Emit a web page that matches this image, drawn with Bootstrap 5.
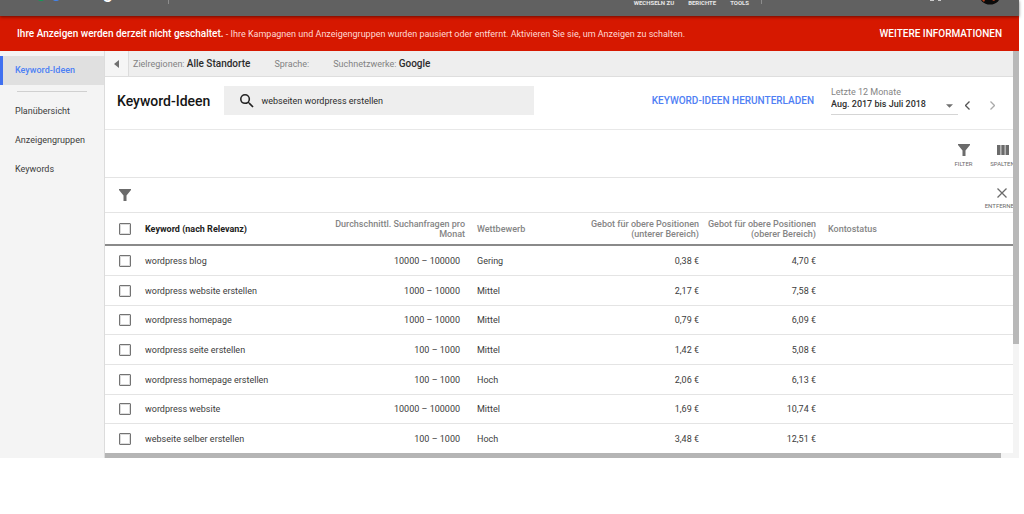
<!DOCTYPE html>
<html lang="de">
<head>
<meta charset="utf-8">
<meta name="viewport" content="width=device-width, initial-scale=1">
<title>Keyword-Ideen</title>
<link href="https://cdn.jsdelivr.net/npm/bootstrap@5.3.0/dist/css/bootstrap.min.css" rel="stylesheet">
<style>
  body { font-family: Roboto, "Liberation Sans", sans-serif; font-size: 9px; line-height: 12px; color: #3c3c3c; background: #fff; overflow: hidden; }
  a { text-decoration: none; color: inherit; }
  button { background: none; border: 0; padding: 0; color: inherit; font: inherit; }
  svg { display: block; fill: currentColor; flex: none; }
  .app-shell { margin-right: 5px; }

  /* top bar, scrolled mostly out of view */
  .topbar { height: 16px; background: #616161; color: #e6e6e6; position: relative; z-index: 1; box-shadow: 0 1px 3px rgba(0,0,0,.5); }
  .topbar-inner { height: 16px; overflow: hidden; }
  .topbar-inner > * { flex: none; }
  .brand-name { font-size: 18px; line-height: 24px; font-weight: 500; color: #fff; margin-bottom: 12px; margin-left: 8px; width: 98px; }
  .brand-dots { margin-left: 36px; }
  .toplinks { font-size: 6px; line-height: 8px; font-weight: 700; gap: 14px; padding-bottom: 9px; }
  .tick { width: 1px; height: 4px; background: #8d8d8d; margin-bottom: 12px; }

  .alertbar { background: #d61800; color: #ffd9d4; height: 35px; padding: 0 17px; }
  .alertbar strong { font-size: 10px; font-weight: 500; color: #fff; }
  .alertbar a { font-size: 10px; font-weight: 500; color: #fff; }

  .side { width: 105px; background: #f4f4f4; border-right: 1px solid #dcdcdc; padding-top: 5px; }
  .side a { display: block; height: 29px; line-height: 29px; padding-left: 15px; }
  .side a.current { background: #e0e0e0; border-left: 3px solid #4070f0; padding-left: 12px; color: #4d80f5; font-weight: 500; }
  .side hr { margin: 6px 17px 5px; border-color: #d0d0d0; opacity: 1; }

  .context { height: 26px; background: #eee; border-bottom: 1px solid #dedede; color: #828282; }
  .context b { color: #2b2b2b; font-size: 10px; font-weight: 500; }
  .context button { width: 24px; height: 25px; background: #f5f5f5; border-right: 1px solid #dcdcdc; color: #707070; }

  .title-row { height: 53px; border-bottom: 1px solid #e8e8e8; padding: 0 18px 5px 12px; }
  .title-row h1 { font-size: 14px; line-height: 20px; font-weight: 500; color: #151515; margin: 0 14px 0 0; }
  .searchbox { width: 310px; height: 29px; background: #eee; padding-left: 16px; gap: 7px; color: #222; }
  .searchbox input { border: 0; background: none; font-size: 9px; padding: 0; color: #2b2b2b; outline: 0; }
  .download { color: #4f80f4; font-size: 10px; font-weight: 500; }
  .period { width: 127px; margin-left: 17px; }
  .period label { display: block; font-size: 9px; line-height: 12px; color: #858585; }
  .period select { appearance: none; border: 0; border-bottom: 1px solid #d5d5d5; border-radius: 0; width: 100%; height: 17px; padding: 0 0 3px; font-size: 9px; line-height: 13px; font-weight: 500; color: #303030;
    background: #fff url("data:image/svg+xml,%3Csvg xmlns='http://www.w3.org/2000/svg' viewBox='0 0 8 4'%3E%3Cpath fill='%23707070' d='M0 0h8L4 4z'/%3E%3C/svg%3E") no-repeat right 5px top 6px / 7px 4px; }
  .pager { gap: 20px; margin-left: 7px; padding-top: 9px; }

  .tools { height: 48px; border-bottom: 1px solid #e4e4e4; overflow: hidden; color: #6b6b6b; padding-top: 4px; }
  .tools.filters { height: 35px; padding: 0 0 0 14px; }
  .tool { width: 39px; font-size: 6px; line-height: 8px; white-space: nowrap; flex: none; display: flex; flex-direction: column; align-items: center; }
  .tool-group { margin-right: -9px; }
  .filters .tool { margin-right: -8px; padding-top: 7px; }

  .kw-table { width: 100%; table-layout: fixed; border-collapse: separate; border-spacing: 0; }
  .kw-table td, .kw-table th { padding: 0 6px; vertical-align: middle; white-space: nowrap; }
  .kw-table th { height: 33px; font-weight: 500; line-height: 10px; color: #858585; border-bottom: 2px solid #8a8a8a; }
  .kw-table th.sorted { color: #222; font-weight: 700; }
  .kw-table td { height: 30px; border-bottom: 1px solid #e4e4e4; }
  .kw-table tbody tr:nth-child(3n) td { height: 29px; }
  .kw-table tbody tr:last-child td { height: 29px; border-bottom: 0; }
  .kw-table .num { text-align: right; padding-left: 0; }
  .kw-table td.volume { padding-right: 11px; }
  .kw-table .pick { padding: 0 0 0 14px; }
  .pick input { appearance: none; display: block; width: 12px; height: 12px; margin: 0; border: 1px solid #737373; border-radius: 1px; outline: 1px solid rgba(115,115,115,.25); outline-offset: -2px; background: #fff; }
  .c-pick { width: 34px; } .c-key { width: 194px; } .c-vol { width: 138px; } .c-bid { width: 117px; }

  .vtrack { width: 6px; background: #f4f4f4; }
  .vtrack div { height: 73%; background: #b8b8b8; }
  .htrack { height: 5px; background: #f4f4f4; }
  .htrack div { height: 5px; width: 98%; background: #b5b5b5; }
</style>
</head>
<body>
<div class="app-shell">
  <header class="topbar">
    <div class="topbar-inner d-flex align-items-end">
      <svg class="brand-dots" width="26" height="16" viewBox="0 0 26 16"><circle cx="5" cy="-3" r="4" fill="#0f9d58"/><circle cx="20" cy="-3" r="4" fill="#4285f4"/></svg>
      <span class="brand-name">Google Ads</span>
      <span class="tick"></span>
      <nav class="toplinks d-flex ms-auto me-2">
        <a href="#">WECHSELN ZU</a><a href="#">BERICHTE</a><a href="#">TOOLS</a>
      </nav>
      <span class="tick ms-1"></span>
      <svg width="257" height="16" viewBox="0 0 257 16"><path d="M168 0h4v1h-4zM176 0h3v1h-3z" fill="#ccc"/><circle cx="228" cy="-7" r="11.500" fill="#0b0b0b"/><path d="M220 0h3l-1 2zM230 0h3l-1 1z" fill="#b5401c"/></svg>
    </div>
  </header>

  <div class="alertbar d-flex align-items-center justify-content-between">
    <span><strong>Ihre Anzeigen werden derzeit nicht geschaltet.</strong> - Ihre Kampagnen und Anzeigengruppen wurden pausiert oder entfernt. Aktivieren Sie sie, um Anzeigen zu schalten.</span>
    <a href="#">WEITERE INFORMATIONEN</a>
  </div>

  <div class="d-flex">
    <nav class="side flex-shrink-0">
      <a class="current" href="#">Keyword-Ideen</a>
      <hr>
      <a href="#">Planübersicht</a>
      <a href="#">Anzeigengruppen</a>
      <a href="#">Keywords</a>
    </nav>

    <div class="flex-grow-1" style="min-width:0">
      <div class="d-flex">
        <main class="flex-grow-1" style="min-width:0">
          <div class="context d-flex align-items-center">
            <button class="d-flex align-items-center justify-content-center me-1" type="button" aria-label="Einklappen"><svg width="5" height="8" viewBox="0 0 5 8"><path d="M5 0v8L0 4z"/></svg></button>
            <span>Zielregionen: <b>Alle Standorte</b></span>
            <span class="ms-4">Sprache:</span>
            <span class="ms-4">Suchnetzwerke: <b>Google</b></span>
          </div>

          <div class="title-row d-flex align-items-center">
            <h1>Keyword-Ideen</h1>
            <label class="searchbox d-flex align-items-center">
              <svg width="14" height="14" viewBox="3 3 18 18"><path d="M15.500 14h-.79l-.28-.27A6.470 6.470 0 0 0 16 9.500 6.500 6.500 0 1 0 9.500 16c1.610 0 3.090-.59 4.230-1.570l.27.28v.79l5 4.990L20.490 19zm-6 0a4.500 4.500 0 1 1 0-9 4.500 4.500 0 0 1 0 9z"/></svg>
              <input class="flex-grow-1" type="text" value="webseiten wordpress erstellen" aria-label="Suche">
            </label>
            <button class="download ms-auto" type="button">KEYWORD-IDEEN HERUNTERLADEN</button>
            <div class="period">
              <label for="range">Letzte 12 Monate</label>
              <select id="range"><option>Aug. 2017 bis Juli 2018</option></select>
            </div>
            <div class="pager d-flex">
              <button type="button" aria-label="Zurück"><svg width="5" height="9" viewBox="0 0 5 9" style="fill:none"><path d="M4.500.5l-4 4 4 4" stroke="#555" stroke-width="1.300"/></svg></button>
              <button type="button" aria-label="Weiter"><svg width="5" height="9" viewBox="0 0 5 9" style="fill:none"><path d="M.5.5l4 4-4 4" stroke="#aaa" stroke-width="1.300"/></svg></button>
            </div>
          </div>

          <div class="tools d-flex align-items-center justify-content-end">
            <div class="tool-group d-flex">
              <button class="tool" type="button"><svg width="12" height="12" viewBox="0 0 12 12"><path d="M0 0h12v1L7.500 6.500V12h-3V6.500L0 1z"/></svg><span class="mt-1">FILTER</span></button>
              <button class="tool" type="button"><svg width="12" height="12" viewBox="0 0 12 12"><path d="M0 1h3.500v10H0zM4.300 1h3.400v10H4.300zM8.500 1H12v10H8.500z"/></svg><span class="mt-1">SPALTEN</span></button>
            </div>
          </div>

          <div class="tools filters d-flex align-items-center justify-content-between">
            <button type="button" aria-label="Filter hinzufügen"><svg width="12" height="12" viewBox="0 0 12 12"><path d="M0 0h12v1L7.500 6.500V12h-3V6.500L0 1z"/></svg></button>
            <button class="tool" type="button"><svg width="10" height="10" viewBox="0 0 10 10"><path d="M.5.5l9 9M9.500.5l-9 9" stroke="currentColor" stroke-width="1.300"/></svg><span class="mt-1">ENTFERNEN</span></button>
          </div>

          <table class="kw-table">
            <colgroup><col class="c-pick"><col class="c-key"><col class="c-vol"><col class="c-bid"><col class="c-bid"><col class="c-bid"><col></colgroup>
            <thead>
              <tr>
                <th class="pick"><input type="checkbox" aria-label="Alle auswählen"></th>
                <th class="sorted">Keyword (nach Relevanz)</th>
                <th class="num">Durchschnittl. Suchanfragen pro<br>Monat</th>
                <th>Wettbewerb</th>
                <th class="num">Gebot für obere Positionen<br>(unterer Bereich)</th>
                <th class="num">Gebot für obere Positionen<br>(oberer Bereich)</th>
                <th>Kontostatus</th>
              </tr>
            </thead>
            <tbody>
              <tr><td class="pick"><input type="checkbox" aria-label="wordpress blog"></td><td>wordpress blog</td><td class="num volume">10000 – 100000</td><td>Gering</td><td class="num">0,38 €</td><td class="num">4,70 €</td><td></td></tr>
              <tr><td class="pick"><input type="checkbox" aria-label="wordpress website erstellen"></td><td>wordpress website erstellen</td><td class="num volume">1000 – 10000</td><td>Mittel</td><td class="num">2,17 €</td><td class="num">7,58 €</td><td></td></tr>
              <tr><td class="pick"><input type="checkbox" aria-label="wordpress homepage"></td><td>wordpress homepage</td><td class="num volume">1000 – 10000</td><td>Mittel</td><td class="num">0,79 €</td><td class="num">6,09 €</td><td></td></tr>
              <tr><td class="pick"><input type="checkbox" aria-label="wordpress seite erstellen"></td><td>wordpress seite erstellen</td><td class="num volume">100 – 1000</td><td>Mittel</td><td class="num">1,42 €</td><td class="num">5,08 €</td><td></td></tr>
              <tr><td class="pick"><input type="checkbox" aria-label="wordpress homepage erstellen"></td><td>wordpress homepage erstellen</td><td class="num volume">100 – 1000</td><td>Hoch</td><td class="num">2,06 €</td><td class="num">6,13 €</td><td></td></tr>
              <tr><td class="pick"><input type="checkbox" aria-label="wordpress website"></td><td>wordpress website</td><td class="num volume">10000 – 100000</td><td>Mittel</td><td class="num">1,69 €</td><td class="num">10,74 €</td><td></td></tr>
              <tr><td class="pick"><input type="checkbox" aria-label="webseite selber erstellen"></td><td>webseite selber erstellen</td><td class="num volume">100 – 1000</td><td>Hoch</td><td class="num">3,48 €</td><td class="num">12,51 €</td><td></td></tr>
            </tbody>
          </table>
        </main>
        <div class="vtrack flex-shrink-0"><div></div></div>
      </div>
      <div class="htrack"><div></div></div>
    </div>
  </div>
</div>
<script src="https://cdn.jsdelivr.net/npm/bootstrap@5.3.0/dist/js/bootstrap.bundle.min.js"></script>
</body>
</html>
